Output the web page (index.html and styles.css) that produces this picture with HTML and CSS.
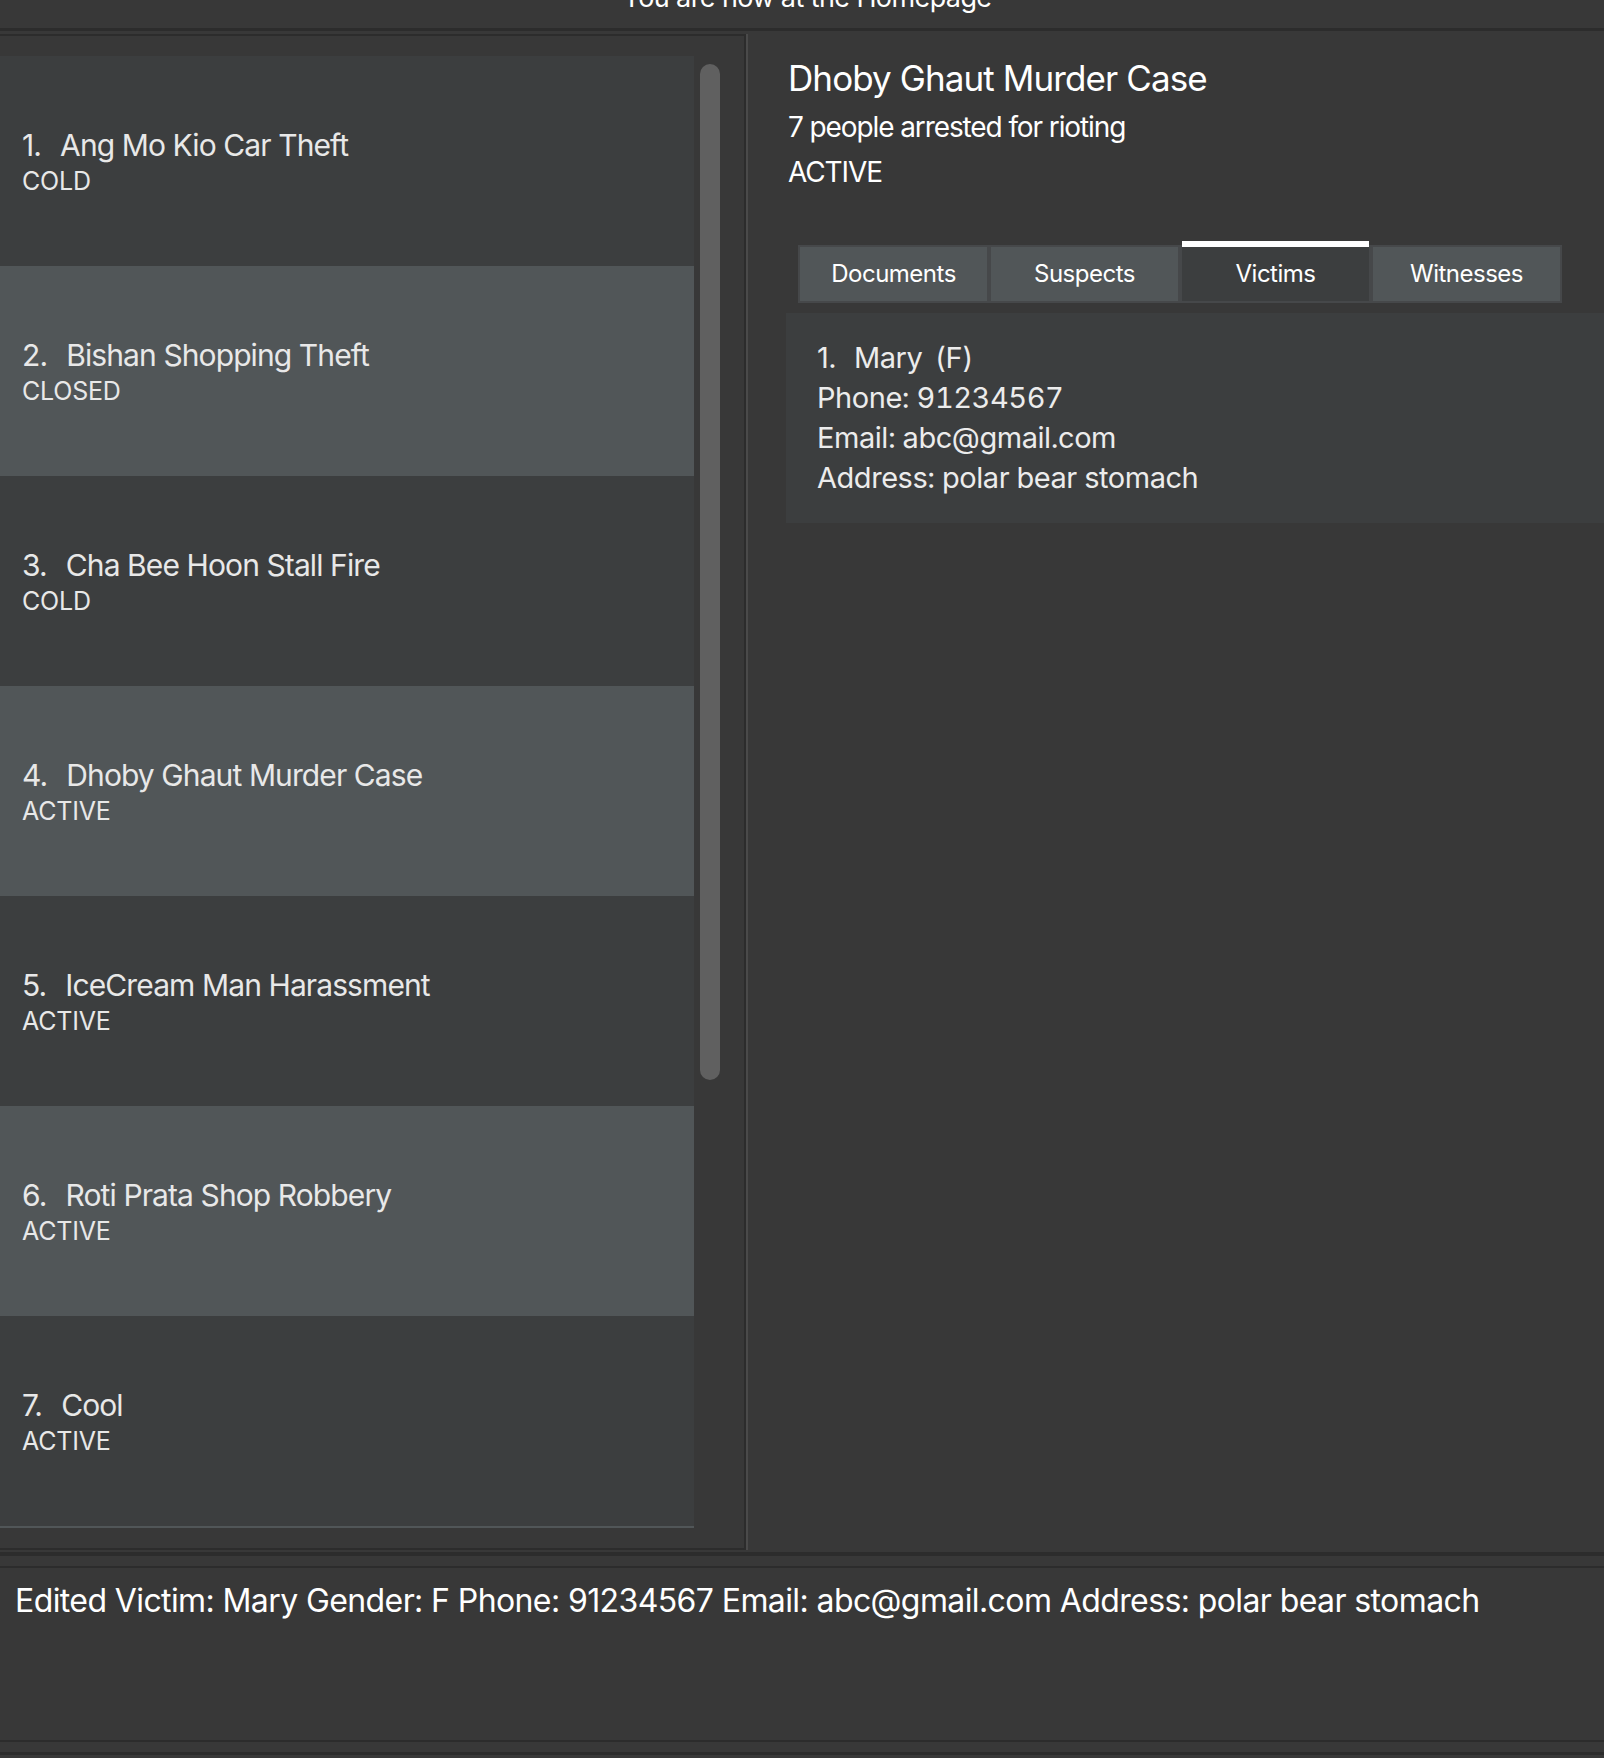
FILE: index.html
```html
<!DOCTYPE html>
<html lang="en">
<head>
<meta charset="utf-8">
<title>Case Book</title>
<link rel="stylesheet" href="styles.css">
</head>
<body>
<div class="app">
  <header class="topbar"><div class="topbar-text">You are now at the Homepage</div></header>
  <main class="main">
    <section class="cases">
      <div class="case-viewport">
        <ul class="case-list">
          <li class="case even"><div class="case-title"><span class="idx">1.</span>  Ang Mo Kio Car Theft</div><div class="case-status">COLD</div></li>
          <li class="case odd"><div class="case-title"><span class="idx">2.</span>  Bishan Shopping Theft</div><div class="case-status">CLOSED</div></li>
          <li class="case even"><div class="case-title"><span class="idx">3.</span>  Cha Bee Hoon Stall Fire</div><div class="case-status">COLD</div></li>
          <li class="case odd"><div class="case-title"><span class="idx">4.</span>  Dhoby Ghaut Murder Case</div><div class="case-status">ACTIVE</div></li>
          <li class="case even"><div class="case-title"><span class="idx">5.</span>  IceCream Man Harassment</div><div class="case-status">ACTIVE</div></li>
          <li class="case odd"><div class="case-title"><span class="idx">6.</span>  Roti Prata Shop Robbery</div><div class="case-status">ACTIVE</div></li>
          <li class="case even"><div class="case-title"><span class="idx">7.</span>  Cool</div><div class="case-status">ACTIVE</div></li>
          <li class="case odd"></li>
        </ul>
        <div class="scrollbar"><div class="thumb"></div></div>
      </div>
    </section>
    <div class="divider"></div>
    <section class="detail">
      <h1 class="detail-title">Dhoby Ghaut Murder Case</h1>
      <div class="detail-line">7 people arrested for rioting</div>
      <div class="detail-line">ACTIVE</div>
      <div class="tabs">
        <div class="tab">Documents</div>
        <div class="tab">Suspects</div>
        <div class="tab selected">Victims</div>
        <div class="tab">Witnesses</div>
      </div>
      <ul class="person-list">
        <li class="person">
          <div class="person-line"><span class="pidx">1.</span>  Mary <span class="gender">(F)</span></div>
          <div class="person-line">Phone: 91234567</div>
          <div class="person-line">Email: abc@gmail.com</div>
          <div class="person-line">Address: polar bear stomach</div>
        </li>
      </ul>
    </section>
  </main>
  <div class="cmdbar"></div>
  <div class="result">Edited Victim: Mary Gender: F Phone: 91234567 Email: abc@gmail.com Address: polar bear stomach</div>
  <div class="statusbar"></div>
</div>
</body>
</html>
```
FILE: styles.css
```css
* { box-sizing: border-box; }
html, body { margin: 0; padding: 0; }
body {
  background: #383838;
  font-family: "Inter", "Noto Sans", sans-serif;
  color: #ffffff;
  width: 1604px;
  height: 1758px;
  overflow: hidden;
}
.app { display: flex; flex-direction: column; height: 1758px; }

.topbar {
  height: 31px;
  border-bottom: 3px solid #2c2c2c;
  overflow: hidden;
  text-align: center;
  flex: none;
}
.topbar-text {
  font-size: 27px;
  line-height: 28px;
  margin-top: -16px;
  padding-left: 10px;
  letter-spacing: -0.6px;
  color: #ffffff;
}

.main {
  display: flex;
  height: 1521px;
  padding: 3px 0 2px;
  flex: none;
}
.cases {
  width: 746px;
  border-top: 2px solid #2c2c2c;
  border-right: 2px solid #2c2c2c;
  border-bottom: 2px solid #2c2c2c;
  padding: 20px 0;
  flex: none;
}
.case-viewport {
  display: flex;
  gap: 6px;
  height: 1472px;
  overflow: hidden;
}
.case-list {
  list-style: none;
  margin: 0;
  padding: 0;
  width: 694px;
  flex: none;
  overflow: hidden;
}
.case {
  height: 210px;
  padding-left: 22px;
  display: flex;
  flex-direction: column;
  justify-content: center;
  color: #e8e8e8;
}
.case.even { background: #3c3e3f; }
.case.odd { background: #515658; }
.case-title {
  font-size: 30px;
  line-height: 40px;
  white-space: pre;
  letter-spacing: -0.9px;
}
.idx { margin-right: 4px; }
.case-status {
  font-size: 25px;
  line-height: 32px;
  letter-spacing: -0.2px;
}
.scrollbar {
  width: 20px;
  flex: none;
  padding-top: 8px;
}
.thumb {
  height: 1016px;
  background: #606060;
  border-radius: 10px;
}

.divider {
  width: 2px;
  background: #4a4a4a;
  flex: none;
}

.detail {
  flex: 1;
  display: flex;
  flex-direction: column;
  padding-top: 22px;
  overflow: hidden;
}
.detail-title {
  margin: 0 0 5px 40px;
  font-size: 35px;
  font-weight: 400;
  line-height: 44px;
  letter-spacing: -0.9px;
}
.detail-line {
  margin-left: 40px;
  font-size: 28px;
  line-height: 45px;
  letter-spacing: -1.1px;
}
.tabs {
  margin: 50px 0 0 50px;
  width: 764px;
  height: 58px;
  padding: 2px;
  gap: 4px;
  display: flex;
  align-items: flex-end;
  background: #46484a;
}
.tab {
  flex: 1;
  height: 54px;
  background: #515658;
  font-size: 24px;
  line-height: 54px;
  letter-spacing: -0.5px;
  text-align: center;
  color: #ffffff;
}
.tab.selected {
  background: #3c3e3f;
  height: 60px;
  margin-top: -6px;
  border-top: 6px solid #ffffff;
  line-height: 54px;
}
.person-list {
  list-style: none;
  margin: 10px 0 0 38px;
  padding: 0;
}
.person {
  height: 210px;
  background: #3c3e3f;
  padding-left: 31px;
  display: flex;
  flex-direction: column;
  justify-content: center;
  color: #ececec;
}
.person-line {
  font-size: 29px;
  line-height: 40px;
  white-space: pre;
  letter-spacing: -0.45px;
  font-variant-numeric: tabular-nums;
}
.pidx { font-variant-numeric: proportional-nums; margin-right: 3px; }
.gender { margin-left: 5px; }

.cmdbar {
  height: 16px;
  border-top: 4px solid #2c2c2c;
  border-bottom: 2px solid #2c2c2c;
  flex: none;
}
.result {
  height: 172px;
  padding: 13px 0 0 15px;
  font-size: 32px;
  line-height: 40px;
  letter-spacing: -0.6px;
  color: #ffffff;
  flex: none;
  white-space: nowrap;
}
.statusbar {
  height: 18px;
  border-top: 2px solid #2c2c2c;
  flex: none;
  background: #383838;
}
.statusbar::after {
  content: "";
  display: block;
  margin-top: 10px;
  height: 3px;
  background: #2c2c2c;
}
```
